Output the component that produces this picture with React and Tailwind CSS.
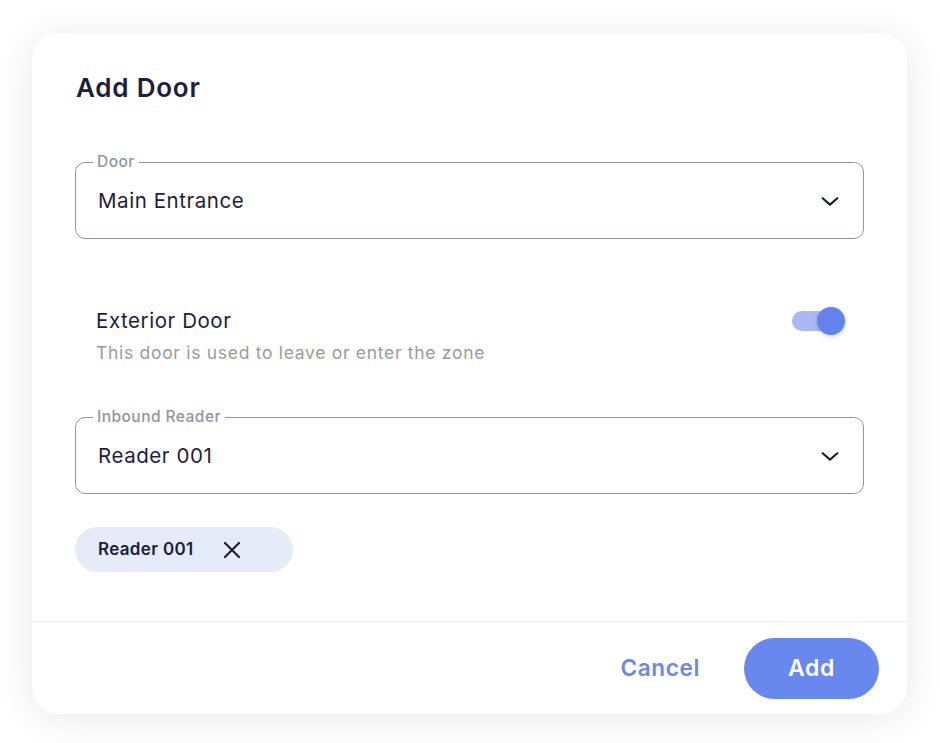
import React, { useState } from 'react';

const font = { fontFamily: 'Inter, "Noto Sans", sans-serif' };

const Chevron = () => (
  <svg width="22" height="22" viewBox="0 0 24 24" fill="none" stroke="#1b1e3d" strokeWidth="2.4" strokeLinecap="round" strokeLinejoin="round">
    <path d="M4 9l8 7 8-7" />
  </svg>
);

const SelectField = ({ label, value }) => (
  <div className="relative h-[77px] rounded-[10px] border border-[#8e95a4] pl-[22px] pr-[22px] flex items-center justify-between">
    <span className="absolute -top-[11px] left-[17px] px-[4px] bg-white text-[15.5px] leading-[20px] tracking-[0.03em] text-[#8e95a4] font-medium">{label}</span>
    <span className="text-[20.5px] text-[#1b1e3d] leading-[28px] tracking-[0.027em]">{value}</span>
    <Chevron />
  </div>
);

const App = () => {
  const [exterior, setExterior] = useState(true);

  return (
    <div className="min-h-screen bg-white pt-[33px] pl-[32px]" style={font}>
      <div className="w-[875px] h-[681px] bg-white rounded-[26px] shadow-[0_4px_40px_rgba(0,0,0,0.09)] flex flex-col">
        <div className="px-[43px] pt-[40px] flex-1">
          <h2 className="text-[26px] font-semibold text-[#1b1e3d] leading-[30px] tracking-[0.03em] ml-[1px]">Add Door</h2>

          <div className="mt-[59px]">
            <SelectField label="Door" value="Main Entrance" />
          </div>

          <div className="mt-[68px] pl-[21px] pr-[19px] flex items-start justify-between">
            <div>
              <p className="text-[20.5px] text-[#1b1e3d] leading-[28px] tracking-[0.027em]">Exterior Door</p>
              <p className="text-[17.5px] text-[#9b9b9b] leading-[24px] tracking-[0.04em] mt-[6px]">This door is used to leave or enter the zone</p>
            </div>
            <button
              onClick={() => setExterior(!exterior)}
              className="relative w-[54px] h-[28px] flex items-center"
            >
              <span className={`absolute left-[1px] right-[2px] h-[20px] rounded-full ${exterior ? 'bg-[#aab9f4]' : 'bg-gray-300'}`} />
              <span className={`absolute h-[28px] w-[28px] rounded-full shadow-[0_1px_4px_rgba(60,80,200,0.3)] ${exterior ? 'right-0 bg-[#6283ec]' : 'left-0 bg-white'}`} />
            </button>
          </div>

          <div className="mt-[52px]">
            <SelectField label="Inbound Reader" value="Reader 001" />
          </div>

          <div className="mt-[33px] inline-flex items-center h-[45px] w-[218px] rounded-full bg-[#e5ebf8] pl-[23px]">
            <span className="text-[17px] font-semibold text-[#1b1e3d] tracking-[0.02em]">Reader 001</span>
            <svg className="ml-[28px]" width="20" height="20" viewBox="0 0 20 20" fill="none" stroke="#1b1e3d" strokeWidth="2.2" strokeLinecap="round">
              <path d="M3 3l14 14M17 3L3 17" />
            </svg>
          </div>
        </div>

        <div className="border-t border-[#eeeeee] h-[93px] flex items-center justify-end gap-[44px] pr-[28px]">
          <button className="text-[22.5px] font-semibold text-[#6a88e8] tracking-[0.03em]">Cancel</button>
          <button className="w-[135px] h-[61px] rounded-full bg-[#6888ee] text-white text-[23px] font-semibold tracking-[0.03em]">Add</button>
        </div>
      </div>
    </div>
  );
};

export default App;
